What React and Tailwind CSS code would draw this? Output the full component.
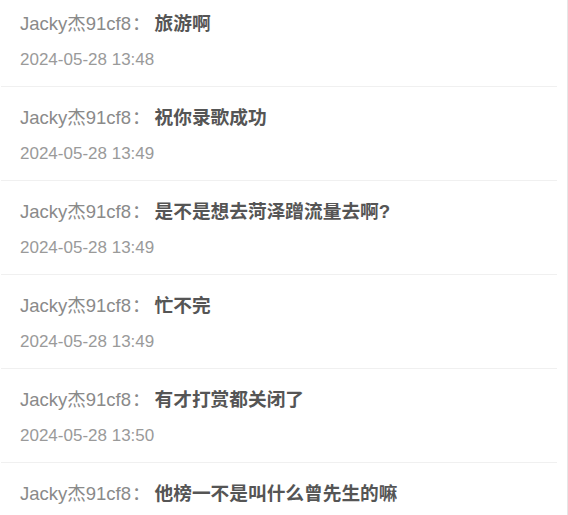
import React from "react";

const items = [
  ["旅游啊", "2024-05-28 13:48"],
  ["祝你录歌成功", "2024-05-28 13:49"],
  ["是不是想去菏泽蹭流量去啊?", "2024-05-28 13:49"],
  ["忙不完", "2024-05-28 13:49"],
  ["有才打赏都关闭了", "2024-05-28 13:50"],
  ["他榜一不是叫什么曾先生的嘛", "2024-05-28 13:50"],
];

export default function App() {
  return (
    <div
      className="w-[568px] h-[515px] overflow-hidden bg-white flex"
      style={{ fontFamily: '"Liberation Sans", "Noto Sans CJK SC", sans-serif' }}
    >
      <div className="w-[567px] h-full overflow-hidden pr-[10px]">
        <div className="-mt-[7px] ml-[1px]">
          {items.map(([c, d], i) => (
            <div key={i} className="h-[94px] pt-[19px] border-b border-[#f0f0f0]">
              <div className="pl-[19px] h-[24px] leading-[24px] whitespace-nowrap flex items-center">
                <span className="text-[18.5px] text-[#8a8a8a]">Jacky杰91cf8</span>
                <span className="text-[18.5px] text-[#8a8a8a] ml-[1px] mr-[4px]">：</span>
                <span className="text-[18.7px] font-bold text-[#555555]">{c}</span>
              </div>
              <div className="pl-[19px] mt-[12px] h-[24px] leading-[24px] text-[17px] text-[#9a9a9a]">{d}</div>
            </div>
          ))}
        </div>
      </div>
      <div className="w-[1px] h-full bg-[#e6e6e6]" />
    </div>
  );
}
